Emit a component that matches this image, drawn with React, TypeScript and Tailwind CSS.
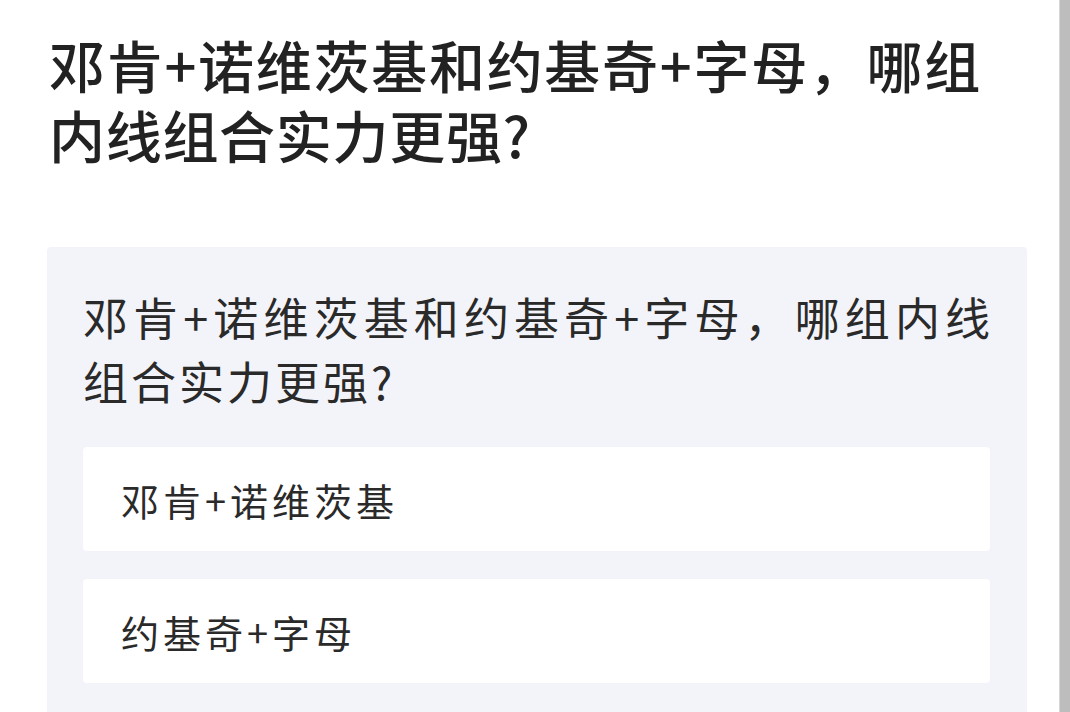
const options = ['邓肯+诺维茨基', '约基奇+字母'];

export default function App() {
  return (
    <div className="flex h-[712px] w-[1070px] overflow-hidden bg-white font-['Noto_Sans_CJK_SC','Noto_Sans',sans-serif] text-[#222222]">
      <main className="flex-1 pt-[29px] pl-[47px] pr-[32px]">
        <h1 className="mr-[46px] pl-[2px] text-justify text-[56px] leading-[70px] font-medium tracking-[0.7px]">
          邓肯+诺维茨基和约基奇+字母，哪组内线组合实力更强?
        </h1>
        <section className="mt-[78px] rounded-[4px] bg-[#f3f4f9] pl-[36px] pr-[34px] pt-[38px] pb-[40px]">
          <p className="text-justify text-[45px] leading-[64px] tracking-[3px] text-[#2a2a2a]">
            邓肯+诺维茨基和约基奇+字母，哪组内线组合实力更强?
          </p>
          <div className="mt-[34px] mr-[3px] flex flex-col gap-[28px]">
            {options.map((opt) => (
              <div
                key={opt}
                className="flex h-[104px] items-center rounded-[4px] bg-white px-[38px] text-[38px] tracking-[4px] text-[#2a2a2a]"
              >
                {opt}
              </div>
            ))}
          </div>
        </section>
      </main>
      <div className="w-[11px] border-l border-[#d6d6d6] bg-[#bdbdbd]" />
    </div>
  );
}
